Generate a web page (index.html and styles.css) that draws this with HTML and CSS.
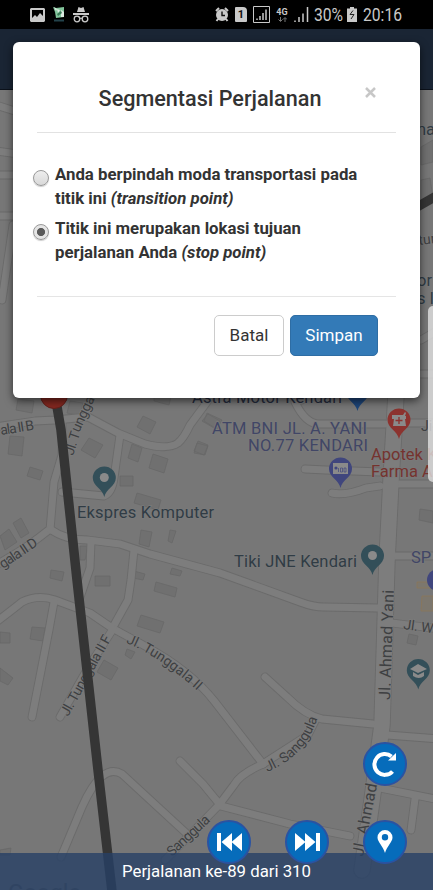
FILE: index.html
```html
<!DOCTYPE html>
<html lang="id">
<head>
<meta charset="utf-8">
<title>Segmentasi Perjalanan</title>
<link rel="stylesheet" href="styles.css">
</head>
<body>
<div class="screen">
  <svg class="map" viewBox="0 0 433 890" aria-hidden="true">
    <defs>
      <g id="roads">
        <path class="r8" d="M-5 427L35 421L55 420L88 417L118 433L145 444Q168 450 178 443Q184 438 190 425L207 402L222 370"/>
        <path class="r8" d="M120 435L114 478Q112 493 104 496L62 492"/>
        <path class="r8" d="M62 423L62 455L54 482L50 530M50 529Q30 545 18 552L-5 566"/>
        <path class="r8" d="M50 529Q65 540 88 540L120 544L150 554L220 573L300 602Q313 607 324 607L378 608"/>
        <path class="r8" d="M91 542L90 568L79 600"/>
        <path class="r8" d="M134 550L131 580L128 600L113 627"/>
        <path class="r8" d="M-5 623Q12 610 22 602Q38 594 55 600L90 613L112 628L145 646Q190 670 215 702L263 764"/>
        <path class="r8" d="M54 602L49 630L32 717"/>
        <path class="r8" d="M113 629L88 668L60 717"/>
        <path class="r8" d="M265 677L287 697Q305 715 322 719L373 724M263 764L308 735L316 719"/>
        <path class="r8" d="M263 764Q240 774 234 785L219 805L185 840L165 860M180 761L203 784L221 806L290 824L350 836"/>
        <path class="r8" d="M61 857L82 807Q102 762 122 774L186 833"/>
        <path class="r8" d="M332 493Q345 496 366 488L380 486M390 484H440M305 469L326 470L380 472M302 400L295 402Q305 423 318 424L385 424"/>
        <path class="r8" d="M396 423H440M392 556H440M392 623L440 629M387 735L440 739M380 788L440 800M415 799L411 830M421 340L440 329M421 374H440"/>
        <path class="r16" d="M396 395L391 480L387 560L384 660L382 725L372 800L362 870"/>
        <path class="r8" d="M-4 105L18 112M-4 151L18 154M-4 175H18M-4 216H18M13 225L2 300"/>
      </g>
      <path id="pin" d="M0 19C-1.5 11-11.5 8-11.5 0A11.5 11.5 0 1 1 11.5 0C11.5 8 1.5 11 0 19Z"/>
    </defs>
    <rect class="land" width="433" height="890"/>
    <g class="building">
      <path d="M18 399l16 2-2 12-16-3zM70 401l13 2-3 13-13-3zM10 436l14 1-2 19-14-2zM30 467l13 4-3 9-13-4zM89 438l14 7-8 13-14-8zM143 416l13 6-6 12-13-7zM132 444l10 4-4 14-10-4zM153 454l15 5-4 14-15-5zM120 476h13v10h-13zM137 493l24 7-3 10-24-7zM198 441l10 4-4 10-10-4zM207 413l15 7-5 9-13-8zM154 394l18-1-3 12-15-4zM0 536l9-7 8 13-12 8zM13 523l8-5 8 15-8 5zM141 530l11 2-3 15-10-3zM170 530l6 1-4 12-4-2zM80 546h8l-3 14h-5zM95 576h15v10H95zM51 570l13 2-2 9-12-3zM134 571l11 3-2 6-10-2zM172 568l10 3-2 5-10-2zM156 582l21 6-2 9-21-6zM141 615l23 7-4 11-23-7zM32 627l13 1-2 13-13-2zM0 632l10 1v10H0zM0 668l13 10-5 7-8-4zM127 649l8 3-4 7-6-4zM104 660l14 8-7 12-14-8zM208 414l12 7-6 7-12-7zM197 443l11 3-3 9-11-2zM420 509l13 2v12l-14-3zM409 634l9 2-2 9-9-2zM421 147l12-7v22l-12 3zM421 180l9-2 3 20-12 4zM0 850l11-2-1 7H0z"/>
    </g>
    <path class="shop" d="M417 582h16v6h-16zM422 596h11v15h-12z"/>
    <use href="#roads" class="edge"/>
    <use href="#roads" class="fill"/>

    <g class="street">
      <text transform="translate(1 435) rotate(-9)" textLength="34">ala II B</text>
      <text transform="translate(3 569) rotate(-34)" textLength="43">gala II D</text>
      <text transform="translate(73 456) rotate(-72)" textLength="24">Jl. T</text>
      <text transform="translate(79 433) rotate(-65)" textLength="38">ungga</text>
      <text transform="translate(68 717) rotate(-61)" textLength="90">Jl. Tunggala II F</text>
      <path id="curve" class="guide" d="M126 643Q162 657 206 699"/>
      <text><textPath href="#curve">Jl. Tunggala II</textPath></text>
      <path id="curve2" class="guide" d="M267 772Q309 755 319 712"/>
      <text><textPath href="#curve2">Jl. Sanggula</textPath></text>
      <text transform="translate(172 857) rotate(-43)" textLength="53">Sanggula</text>
      <text transform="translate(419 245) rotate(-7)">tur</text>
      <text x="421" y="431">Ji</text>
      <text transform="translate(403 629) rotate(8)" textLength="30">Jl. W</text>
      <g class="avenue">
        <text transform="translate(390 700) rotate(-88)" textLength="110">Jl. Ahmad Yani</text>
        <text transform="translate(363 857) rotate(-79)" textLength="74">Jl. Ahmad</text>
      </g>
    </g>
    <path class="route" d="M55 395L61 430L77 580L98 770L113 900M417 207L438 195"/>
    <circle class="stop" cx="54" cy="395" r="13.5"/>
    <g class="place">
      <text x="77" y="517.5" textLength="137">Ekspres Komputer</text>
      <text x="234" y="567" textLength="123">Tiki JNE Kendari</text>
      <text x="192" y="403" class="dark" textLength="150">Astra Motor Kendari</text>
      <text x="417" y="135">na</text>
      <text x="417" y="286">or</text>
      <text x="417" y="304">s In</text>
      <g class="violet">
        <text x="212" y="433.5" textLength="155">ATM BNI JL. A. YANI</text>
        <text x="248" y="451" textLength="120">NO.77 KENDARI</text>
        <text x="411" y="563">SP</text>
      </g>
      <g class="red">
        <text x="371" y="460">Apotek K</text>
        <text x="371" y="477">Farma A</text>
      </g>
    </g>
    <use href="#pin" class="teal" x="104.3" y="478"/><circle class="hole" cx="104.3" cy="477.5" r="4.5"/>
    <use href="#pin" class="teal" x="372.5" y="556"/><circle class="hole" cx="372.5" cy="555.5" r="4.5"/>
    <use href="#pin" class="teal" x="418.3" y="670.5"/>
    <path class="hole" d="M410 669l8-5 9 5-9 4zM413 672l5 3 6-3v4q-5 4-11 0z"/>
    <use href="#pin" class="pinred" x="399" y="420"/>
    <path class="hole" d="M392 415h11l2-3 1 1-1 3h1v3h-1l1 7h-13l1-7h-2z"/><path class="cross" d="M399 417v7M395.5 420.500h7"/>
    <use href="#pin" class="pinviolet" x="340.500" y="469"/>
    <path class="hole" d="M333 463h15v11h-15z"/><circle class="pinviolet" cx="336" cy="468" r="1.600"/><path class="bill" d="M338.500 468v4M340.500 468h2v4h-2zM344 468h2v4h-2z"/>
    <use href="#pin" class="pinblue" x="357.500" y="392"/>
    <circle class="pinviolet" cx="438" cy="580" r="11"/>
    <text class="google" x="8" y="901">Google</text>
  </svg>

  <header class="status">
    <div class="notices">
      <svg width="15" height="14" viewBox="0 0 15 14"><path fill="#c9c9c9" fill-rule="evenodd" d="M1 0h13l1 1v12l-1 1H1l-1-1V1zM2 2v8l3-3 2 2 3-4 3 3V2z"/></svg>
      <svg width="12" height="18" viewBox="0 0 12 18"><path fill="#83c69c" d="M0 1l3 1 8-1v10l-8 1-1-6z"/><path fill="#dcebe1" d="M1 1l3 2-1 2zM8 4l3 2v5H8zM4 3l3 1-2 3z"/><path fill="#397a56" d="M4 8l4-3 1 2-4 3z"/><path stroke="#23424b" stroke-width="2" d="M1 14.500h10"/></svg>
      <svg width="16" height="16" viewBox="0 0 16 16"><path fill="#c9c9c9" d="M4 5L5.500 0 8 1l2.500-1L12 5zM0 6h16v2H0z"/><g fill="none" stroke="#c9c9c9" stroke-width="1.300"><circle cx="4" cy="12" r="2.800"/><circle cx="12" cy="12" r="2.800"/><path d="M7 11.500q1-.8 2 0"/></g></svg>
    </div>
    <div class="signals">
      <svg width="14" height="15" viewBox="0 0 14 15"><path stroke="#c9c9c9" stroke-width="2" d="M1 4l3-3M13 4l-3-3M3 12l-1.500 2M11 12l1.500 2"/><circle cx="7" cy="8" r="6" fill="#c9c9c9"/><path fill="none" stroke="#111" stroke-width="1.400" d="M7 4.500V8.500h3"/></svg>
      <span class="sim">1</span>
      <svg width="17" height="17" viewBox="0 0 17 17"><path fill="none" stroke="#c9c9c9" d="M.5.500h16v16H.5z"/><path stroke="#c9c9c9" stroke-width="1.500" d="M4 14v-1.500M7 14v-4M10 14V7M13 14V3.500"/></svg>
      <span class="net"><b>4G</b><svg width="9" height="5" viewBox="0 0 9 5"><path fill="none" stroke="#777" d="M2.500 0v4M.5 2.500l2 2 2-2M7 5V1M5 2.500l2-2 2 2"/></svg></span>
      <svg width="15" height="15" viewBox="0 0 15 15"><path stroke="#c9c9c9" stroke-width="1.500" d="M1 15v-1.500M5 15v-5M9 15V6.500M13.500 15V0"/></svg>
      <span class="reading level">30%</span>
      <svg class="battery" width="10" height="15" viewBox="0 0 10 15"><path fill="#c9c9c9" d="M3 0h4v1.500h3V15H0V1.500h3z"/><path fill="none" stroke="#222" d="M6 3.500L3 7.500h4L4 12"/></svg>
      <span class="reading clock">20:16</span>
    </div>
  </header>
  <div class="navbar"></div>

  <section class="dialog" role="dialog">
    <div class="dialog-head">
      <h4>Segmentasi Perjalanan</h4>
      <button class="close" aria-label="Tutup"><svg width="11" height="11" viewBox="0 0 11 11"><path stroke="#c7c7c7" stroke-width="2.500" d="M1 1l9 9M10 1l-9 9"/></svg></button>
    </div>
    <div class="choices">
      <label><i class="radio"></i><span>Anda berpindah moda transportasi pada<br>titik ini <em>(transition point)</em></span></label>
      <label><i class="radio on"></i><span>Titik ini merupakan lokasi tujuan<br>perjalanan Anda <em>(stop point)</em></span></label>
    </div>
    <div class="actions">
      <button class="btn plain">Batal</button>
      <button class="btn primary">Simpan</button>
    </div>
  </section>

  <div class="edge-handle"></div>
  <footer class="trip">Perjalanan ke-89 dari 310</footer>
  <button class="round reload" aria-label="Muat ulang"><svg viewBox="0 0 44 44"><path fill="none" stroke="#fff" stroke-width="4" d="M29.500 29.500A10.400 10.400 0 1 1 28.500 14.500"/><path fill="#fff" d="M33 11v7.500h-8z"/></svg></button>
  <button class="round prev" aria-label="Sebelumnya"><svg viewBox="0 0 44 44"><path fill="#fff" d="M10 13h4v18h-4zM25 13v18L14.500 22zM35 13v18L24.500 22z"/></svg></button>
  <button class="round next" aria-label="Berikutnya"><svg viewBox="0 0 44 44"><path fill="#fff" d="M31 13h4v18h-4zM10 13v18l10.500-9zM20 13v18l10.500-9z"/></svg></button>
  <button class="round locate" aria-label="Lokasi"><svg viewBox="0 0 44 44"><path fill="#fff" fill-rule="evenodd" d="M22 33C20 26 14.500 22 14.500 17.500a7.500 7.500 0 0 1 15 0C29.500 22 24 26 22 33zM22 14a3.200 3.200 0 1 0 0 6.400A3.200 3.200 0 0 0 22 14z"/></svg></button>
</div>
</body>
</html>
```

FILE: styles.css
```css
* { box-sizing: border-box; }
body { margin: 0; font-family: Roboto, sans-serif; }
button { font: inherit; cursor: pointer; }
.screen { position: relative; width: 433px; height: 890px; overflow: hidden; }

.map { position: absolute; inset: 0; width: 433px; height: 890px; }
.land { fill: #777; }
.building { fill: #707070; stroke: #686868; stroke-width: .8; }
.shop { fill: #7c776e; stroke: #8c7658; stroke-width: .8; }
#roads { fill: none; stroke-linecap: round; stroke-linejoin: round; }
.edge { stroke: #6b6b6b; }
.edge, .fill { --w: 0px; }
.edge { --w: 1.8px; }
.fill { stroke: #7d7d7d; }
.r8 { stroke-width: calc(7px + var(--w)); }
.r16 { stroke-width: calc(15.500px + var(--w)); }
.route { fill: none; stroke: #353535; stroke-width: 9.500px; }
.stop { fill: #842820; stroke: #65201b; }
.guide { fill: none; stroke: none; }
.street { font-size: 14px; fill: #3e4042; }
.street text { paint-order: stroke; stroke: #7c7c7c; stroke-width: 1.500px; }
.street .avenue { font-size: 16px; }
.place { font-size: 16.500px; fill: #303c45; }
.place text { paint-order: stroke; stroke: #7a7a7a; stroke-width: 1.500px; }
.dark { fill: #252b3c; }
.violet { fill: #414666; }
.red { fill: #75332f; }
.teal { fill: #334f59; }
.hole { fill: #8a8a8a; }
.pinred { fill: #8c332f; }
.pinviolet { fill: #40467d; }
.pinblue { fill: #1d4579; }
.cross { stroke: #8c332f; stroke-width: 1.300px; }
.bill { fill: none; stroke: #40467d; stroke-width: .7px; }
.google { font-size: 23px; fill: #555; }

.status { position: relative; display: flex; justify-content: space-between; height: 29px; padding: 0 31px 0 30px; background: #000; color: #c9c9c9; }
.notices, .signals { display: flex; align-items: center; }
.notices { gap: 8px; }
.signals { gap: 6px; }
.sim { width: 12px; height: 15px; border-radius: 1px 4px 1px 1px; background: #c9c9c9; color: #111; font-size: 11px; font-weight: 700; line-height: 15px; text-align: center; }
.net { display: flex; flex-direction: column; align-items: center; width: 12px; font-size: 9px; line-height: 9px; }
.reading { font-size: 18px; line-height: 29px; transform: scaleX(.87); transform-origin: left; white-space: nowrap; }
.level { width: 28px; margin-left: -1px; }
.clock { width: 39px; }
.battery { margin-left: -1px; }
.navbar { position: relative; height: 61px; background: #1a2534; border-bottom: 1px solid #0c121b; }

.dialog { position: absolute; top: 42px; left: 13px; width: 407px; height: 356px; padding: 0 24px; border-radius: 6px; background: #fff; box-shadow: 0 3px 9px rgba(0, 0, 0, .6); color: #333; }
.dialog-head { position: relative; display: flex; height: 91px; border-bottom: 1px solid #e2e2e2; }
h4 { flex: 1; margin: 42px 0 0; padding-right: 13px; font-size: 21.600px; font-weight: 500; line-height: 30px; text-align: center; white-space: nowrap; }
.close { position: absolute; top: 45px; right: 20px; display: flex; padding: 0; border: 0; background: none; }
.choices { display: flex; flex-direction: column; gap: 6px; height: 163px; padding: 29px 0 0; margin-left: -4px; }
.choices label { display: flex; gap: 6px; font-size: 16.800px; font-weight: 700; line-height: 24px; white-space: nowrap; }
.radio { flex: none; width: 16px; height: 16px; margin-top: 8px; border: 1px solid #999; border-radius: 50%; background: linear-gradient(#eee, #d9d9d9); box-shadow: 0 1px 1px #ccc; }
.radio.on { background: radial-gradient(circle, #5a5a5a 0 3.700px, #e5e5e5 4.400px); }
.actions { display: flex; justify-content: flex-end; gap: 6px; padding: 18px 18px 0 0; border-top: 1px solid #e5e5e5; }
.btn { height: 41px; padding: 0 0 2px; border: 1px solid #ccc; border-radius: 5px; background: #fff; color: #333; font-size: 17px; }
.plain { width: 70px; }
.primary { width: 88px; border-color: #2e6da4; background: #337ab7; color: #fff; }

.edge-handle { position: absolute; top: 306px; right: 0; width: 5px; height: 176px; border-radius: 5px 0 0 5px; background: rgba(225, 225, 225, .8); }
.trip { position: absolute; right: 0; bottom: 0; left: 0; height: 37px; background: rgba(39, 64, 101, .8); color: #fff; font-size: 16.800px; line-height: 36px; text-align: center; }
.round { position: absolute; width: 44px; height: 44px; padding: 0; border: 2px solid #2a53a2; border-radius: 50%; background: #066cbb; }
.round svg { display: block; width: 44px; height: 44px; margin: -2px; }
.reload { top: 742px; left: 363px; }
.prev { top: 820px; left: 207px; }
.next { top: 820px; left: 285px; }
.locate { top: 820px; left: 363px; }
```
